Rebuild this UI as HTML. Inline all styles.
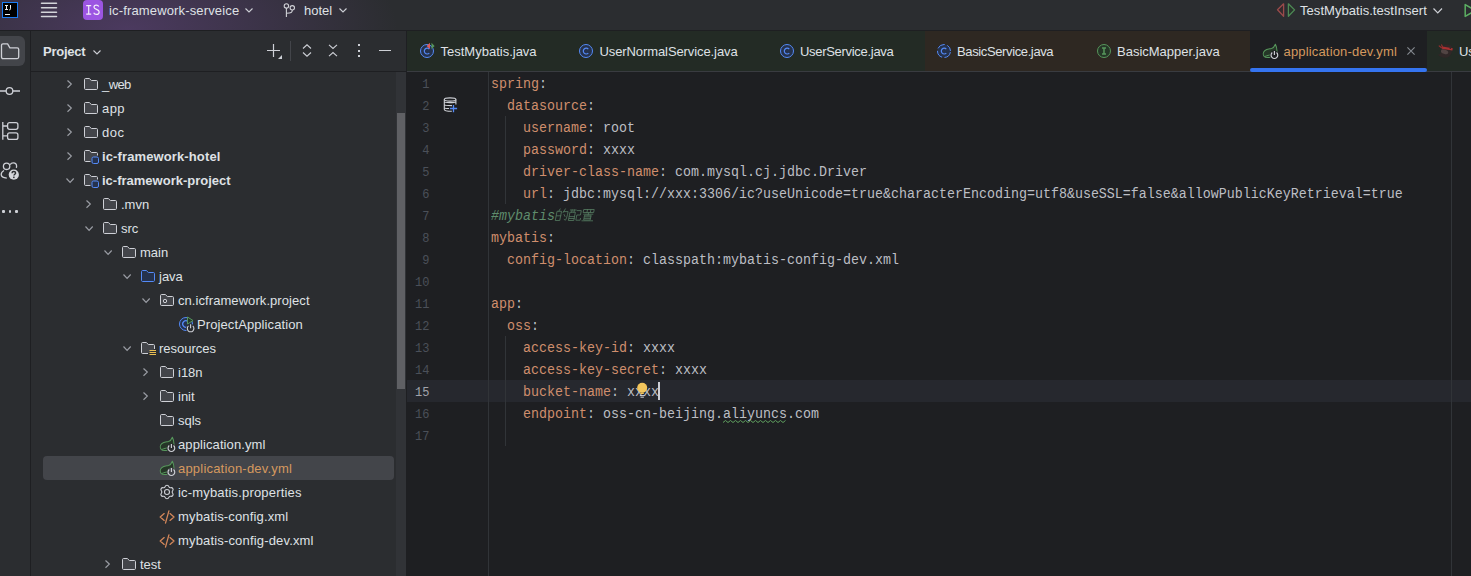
<!DOCTYPE html>
<html><head><meta charset="utf-8"><style>
*{margin:0;padding:0;box-sizing:border-box}
html,body{width:1471px;height:576px;overflow:hidden;background:#2B2D30;font-family:"Liberation Sans",sans-serif;font-size:13px;color:#DFE1E5}
.a{position:absolute}
.t{position:absolute;white-space:pre;line-height:16px}
svg{position:absolute;overflow:visible}
.mono{font-family:"Liberation Mono",monospace;font-size:13.333px}
.k{color:#CF8E6D}
.v{color:#BCBEC4}
.c{color:#5F8C6C;font-style:italic}
</style></head><body>
<div class="a" style="left:0;top:0;width:1471px;height:30px;background:#2B2D30"></div>
<div class="a" style="left:0;top:0;width:1471px;height:30px;background:radial-gradient(ellipse 270px 120px at 128px 30px, rgba(120,75,160,0.42), rgba(120,75,160,0) 100%)"></div>
<div class="a" style="left:0;top:30px;width:1471px;height:1px;background:#1E1F22"></div>
<svg style="left:2px;top:2px" width="16" height="16"><rect x="0.5" y="0.5" width="15" height="15" fill="#000" stroke="#1A7DF5" stroke-width="1"/><path d="M3 3.5 H6 M4.5 3.5 V7.5 M3 7.5 H6 M8.5 3 V6.8 C8.5 7.6 8.1 8 7.2 8" fill="none" stroke="#F0F0F0" stroke-width="1"/><rect x="3" y="12" width="5" height="1" fill="#F0F0F0"/></svg>
<svg style="left:41px;top:0px" width="16" height="20"><path d="M0.5 3.25 H15.5 M0.5 7.65 H15.5 M0.5 12.2 H15.5 M0.5 16.6 H15.5" stroke="#D4D5DA" stroke-width="1.5" stroke-linecap="round"/></svg>
<div class="a" style="left:83px;top:0px;width:20px;height:20px;background:#9C55E2;border-radius:4px"></div>
<svg style="left:83px;top:0px" width="20" height="20"><path d="M3.2 5.6 H8.2 M5.7 5.6 V14.1 M3.2 14.1 H8.2" fill="none" stroke="#F4EEFA" stroke-width="1.2"/><path d="M15.8 6.6 C15.3 5.6 14.4 5.2 13.3 5.2 C11.9 5.2 11 6 11 7.2 C11 9.8 16.2 9 16.2 11.9 C16.2 13.4 15 14.4 13.4 14.4 C12.1 14.4 11.1 13.8 10.7 12.8" fill="none" stroke="#F4EEFA" stroke-width="1.2"/></svg>
<div class="t" style="left:109px;top:3px;color:#DFE1E5;letter-spacing:0.15px">ic-framework-serveice</div>
<svg style="left:244.5px;top:8px" width="8" height="4.5"><path d="M0.5 0.5 L4.0 4.0 L7.5 0.5" fill="none" stroke="#CED0D6" stroke-width="1.1"/></svg>
<svg style="left:283px;top:3px" width="14" height="16"><circle cx="3.4" cy="2.9" r="2.2" fill="none" stroke="#D0D1D6" stroke-width="1.1"/><circle cx="9.3" cy="4.8" r="2.2" fill="none" stroke="#D0D1D6" stroke-width="1.1"/><path d="M3.4 5.1 V14 M9.3 7 C9.3 9.4 8.3 10.2 3.4 10.2" fill="none" stroke="#D0D1D6" stroke-width="1.1"/></svg>
<div class="t" style="left:304px;top:3px;color:#DFE1E5">hotel</div>
<svg style="left:339px;top:8px" width="8" height="4.5"><path d="M0.5 0.5 L4.0 4.0 L7.5 0.5" fill="none" stroke="#CED0D6" stroke-width="1.1"/></svg>
<svg style="left:1277px;top:3px" width="19" height="15"><path d="M6.6 0.8 L0.5 6.8 L6.6 13.2 Z" fill="#342A2D" stroke="#9A4B4B" stroke-width="1.3" stroke-linejoin="round"/><path d="M11.4 0.8 L17.6 6.9 L11.4 13.2 Z" fill="#28332B" stroke="#4E8A55" stroke-width="1.3" stroke-linejoin="round"/></svg>
<div class="t" style="left:1300px;top:3px;color:#DFE1E5;letter-spacing:0.05px">TestMybatis.testInsert</div>
<svg style="left:1432.5px;top:8px" width="9.5" height="5.5"><path d="M0.5 0.5 L4.75 5.0 L9.0 0.5" fill="none" stroke="#CED0D6" stroke-width="1.2"/></svg>
<svg style="left:1464px;top:3px" width="12" height="15"><path d="M1.2 1.6 L11.5 7.5 L1.2 13.4 Z" fill="none" stroke="#5BAE62" stroke-width="1.5" stroke-linejoin="round"/></svg>
<div class="a" style="left:30px;top:31px;width:1px;height:545px;background:#1E1F22"></div>
<div class="a" style="left:-6px;top:36px;width:31px;height:30px;background:#43454A;border-radius:6px"></div>
<svg style="left:0px;top:42px" width="20" height="18"><path d="M1.5 3.4 C1.5 2.5 2.1 1.9 3 1.9 H7.6 L9.9 5.8 H17.2 C18.1 5.8 18.7 6.4 18.7 7.3 V15.1 C18.7 16 18.1 16.6 17.2 16.6 H3 C2.1 16.6 1.5 16 1.5 15.1 Z" fill="none" stroke="#CED0D6" stroke-width="1.3" stroke-linejoin="round"/></svg>
<svg style="left:0px;top:84px" width="22" height="14"><path d="M0 7 H6 M13 7 H20" stroke="#CED0D6" stroke-width="1.3"/><circle cx="9.5" cy="7" r="3.3" fill="none" stroke="#CED0D6" stroke-width="1.3"/></svg>
<svg style="left:1px;top:120px" width="20" height="22"><path d="M1.8 2 V19.8 M1.8 6 H6.5 M1.8 15.9 H6.5" stroke="#CED0D6" stroke-width="1.3" fill="none"/><rect x="6.6" y="2.7" width="10.3" height="6.6" rx="2" fill="none" stroke="#CED0D6" stroke-width="1.3"/><rect x="6.6" y="12.8" width="10.3" height="6.6" rx="2" fill="none" stroke="#CED0D6" stroke-width="1.3"/></svg>
<svg style="left:0px;top:150px" width="24" height="32"><circle cx="6.6" cy="16.3" r="3.2" fill="none" stroke="#CED0D6" stroke-width="1.3"/><path d="M10.2 14.6 C10.8 13.5 11.9 12.9 13.3 12.9 C15.1 12.9 16.6 14.3 16.6 16.2 C16.6 16.8 16.5 17.3 16.2 17.8" fill="none" stroke="#CED0D6" stroke-width="1.3"/><path d="M4 20.5 C2.2 21.4 1.2 23 1.2 24.6 C1.2 26.6 3.5 27.9 6.8 28.2" fill="none" stroke="#CED0D6" stroke-width="1.3"/><circle cx="13.8" cy="24.7" r="6.3" fill="#2B2D30"/><circle cx="13.8" cy="24.7" r="5.1" fill="#D3D5DA"/><path d="M12 23.2 C12 22.1 12.8 21.5 13.8 21.5 C14.9 21.5 15.6 22.2 15.6 23 C15.6 24.2 13.9 24.3 13.9 25.6" fill="none" stroke="#2B2D30" stroke-width="1.4"/><rect x="13.1" y="26.6" width="1.5" height="1.5" fill="#2B2D30"/></svg>
<div class="a" style="left:2.25px;top:210.3px;width:2.5px;height:2.5px;background:#CED0D6;border-radius:1px"></div>
<div class="a" style="left:8.75px;top:210.3px;width:2.5px;height:2.5px;background:#CED0D6;border-radius:1px"></div>
<div class="a" style="left:15.25px;top:210.3px;width:2.5px;height:2.5px;background:#CED0D6;border-radius:1px"></div>
<div class="a" style="left:31px;top:71px;width:375px;height:1px;background:#1E1F22"></div>
<div class="a" style="left:406px;top:31px;width:1px;height:545px;background:#1E1F22"></div>
<div class="t" style="left:43px;top:44px;font-weight:bold;color:#DFE1E5;letter-spacing:-0.25px">Project</div>
<svg style="left:93px;top:49.5px" width="8" height="4.5"><path d="M0.5 0.5 L4.0 4.0 L7.5 0.5" fill="none" stroke="#CED0D6" stroke-width="1.1"/></svg>
<svg style="left:266px;top:43px" width="18" height="18"><path d="M7.5 1 V14 M1 7.5 H14" stroke="#CED0D6" stroke-width="1.2"/><path d="M16 12 V16 H12 Z" fill="#CED0D6"/></svg>
<div class="a" style="left:290px;top:41px;width:1px;height:20px;background:#43454A"></div>
<svg style="left:302px;top:44px" width="10" height="14"><path d="M1 4.5 L5 0.8 L9 4.5 M1 8.5 L5 12.2 L9 8.5" fill="none" stroke="#CED0D6" stroke-width="1.1"/></svg>
<svg style="left:328px;top:44px" width="10" height="14"><path d="M1 0.8 L5 4.5 L9 0.8 M1 12.2 L5 8.5 L9 12.2" fill="none" stroke="#CED0D6" stroke-width="1.1"/></svg>
<div class="a" style="left:358px;top:44px;width:2px;height:2px;background:#CED0D6"></div>
<div class="a" style="left:358px;top:49.5px;width:2px;height:2px;background:#CED0D6"></div>
<div class="a" style="left:358px;top:55px;width:2px;height:2px;background:#CED0D6"></div>
<div class="a" style="left:378.5px;top:50px;width:12.5px;height:1.3px;background:#CED0D6"></div>
<div class="a" style="left:396px;top:72px;width:10px;height:504px;background:#313337"></div>
<div class="a" style="left:397px;top:113px;width:8px;height:276px;background:#5F6064"></div>
<div class="a" style="left:43px;top:456px;width:351px;height:24px;background:#43454A;border-radius:4px"></div>
<svg style="left:67.3px;top:80px" width="4.8" height="8.2"><path d="M0.5 0.5 L4.3 4.1 L0.5 7.699999999999999" fill="none" stroke="#9A9DA4" stroke-width="1.2"/></svg>
<svg style="left:83px;top:76px" width="16" height="16"><path d="M1.5 3.5C1.5 2.95 1.95 2.5 2.5 2.5H6.3L8.4 4.5H13.5C14.05 4.5 14.5 4.95 14.5 5.5V12.5C14.5 13.05 14.05 13.5 13.5 13.5H2.5C1.95 13.5 1.5 13.05 1.5 12.5Z" fill="#43454A" stroke="#CED0D6"/></svg>
<div class="t" style="left:102px;top:77px;color:#DFE1E5;letter-spacing:-0.6px">_web</div>
<svg style="left:67.3px;top:104px" width="4.8" height="8.2"><path d="M0.5 0.5 L4.3 4.1 L0.5 7.699999999999999" fill="none" stroke="#9A9DA4" stroke-width="1.2"/></svg>
<svg style="left:83px;top:100px" width="16" height="16"><path d="M1.5 3.5C1.5 2.95 1.95 2.5 2.5 2.5H6.3L8.4 4.5H13.5C14.05 4.5 14.5 4.95 14.5 5.5V12.5C14.5 13.05 14.05 13.5 13.5 13.5H2.5C1.95 13.5 1.5 13.05 1.5 12.5Z" fill="#43454A" stroke="#CED0D6"/></svg>
<div class="t" style="left:102px;top:101px;color:#DFE1E5;letter-spacing:0.4px">app</div>
<svg style="left:67.3px;top:128px" width="4.8" height="8.2"><path d="M0.5 0.5 L4.3 4.1 L0.5 7.699999999999999" fill="none" stroke="#9A9DA4" stroke-width="1.2"/></svg>
<svg style="left:83px;top:124px" width="16" height="16"><path d="M1.5 3.5C1.5 2.95 1.95 2.5 2.5 2.5H6.3L8.4 4.5H13.5C14.05 4.5 14.5 4.95 14.5 5.5V12.5C14.5 13.05 14.05 13.5 13.5 13.5H2.5C1.95 13.5 1.5 13.05 1.5 12.5Z" fill="#43454A" stroke="#CED0D6"/></svg>
<div class="t" style="left:102px;top:125px;color:#DFE1E5;letter-spacing:0.5px">doc</div>
<svg style="left:67.3px;top:152px" width="4.8" height="8.2"><path d="M0.5 0.5 L4.3 4.1 L0.5 7.699999999999999" fill="none" stroke="#9A9DA4" stroke-width="1.2"/></svg>
<svg style="left:83px;top:148px" width="17" height="17"><path d="M7.5 13.5H2.5C1.95 13.5 1.5 13.05 1.5 12.5V3.5C1.5 2.95 1.95 2.5 2.5 2.5H6.3L8.4 4.5H13.5C14.05 4.5 14.5 4.95 14.5 5.5V7.5" fill="#43454A" stroke="#CED0D6"/><rect x="9" y="9" width="6.5" height="6.5" rx="1.5" fill="#25324D" stroke="#548AF7"/></svg>
<div class="t" style="left:102px;top:149px;color:#DFE1E5;font-weight:bold;letter-spacing:0.12px">ic-framework-hotel</div>
<svg style="left:65.8px;top:177.6px" width="8.2" height="4.8"><path d="M0.5 0.5 L4.1 4.3 L7.699999999999999 0.5" fill="none" stroke="#9A9DA4" stroke-width="1.2"/></svg>
<svg style="left:83px;top:172px" width="17" height="17"><path d="M7.5 13.5H2.5C1.95 13.5 1.5 13.05 1.5 12.5V3.5C1.5 2.95 1.95 2.5 2.5 2.5H6.3L8.4 4.5H13.5C14.05 4.5 14.5 4.95 14.5 5.5V7.5" fill="#43454A" stroke="#CED0D6"/><rect x="9" y="9" width="6.5" height="6.5" rx="1.5" fill="#25324D" stroke="#548AF7"/></svg>
<div class="t" style="left:102px;top:173px;color:#DFE1E5;font-weight:bold;letter-spacing:0px">ic-framework-project</div>
<svg style="left:86.3px;top:200px" width="4.8" height="8.2"><path d="M0.5 0.5 L4.3 4.1 L0.5 7.699999999999999" fill="none" stroke="#9A9DA4" stroke-width="1.2"/></svg>
<svg style="left:102px;top:196px" width="16" height="16"><path d="M1.5 3.5C1.5 2.95 1.95 2.5 2.5 2.5H6.3L8.4 4.5H13.5C14.05 4.5 14.5 4.95 14.5 5.5V12.5C14.5 13.05 14.05 13.5 13.5 13.5H2.5C1.95 13.5 1.5 13.05 1.5 12.5Z" fill="#43454A" stroke="#CED0D6"/></svg>
<div class="t" style="left:121px;top:197px;color:#DFE1E5;letter-spacing:0px">.mvn</div>
<svg style="left:84.8px;top:225.6px" width="8.2" height="4.8"><path d="M0.5 0.5 L4.1 4.3 L7.699999999999999 0.5" fill="none" stroke="#9A9DA4" stroke-width="1.2"/></svg>
<svg style="left:102px;top:220px" width="16" height="16"><path d="M1.5 3.5C1.5 2.95 1.95 2.5 2.5 2.5H6.3L8.4 4.5H13.5C14.05 4.5 14.5 4.95 14.5 5.5V12.5C14.5 13.05 14.05 13.5 13.5 13.5H2.5C1.95 13.5 1.5 13.05 1.5 12.5Z" fill="#43454A" stroke="#CED0D6"/></svg>
<div class="t" style="left:121px;top:221px;color:#DFE1E5;letter-spacing:0px">src</div>
<svg style="left:103.8px;top:249.6px" width="8.2" height="4.8"><path d="M0.5 0.5 L4.1 4.3 L7.699999999999999 0.5" fill="none" stroke="#9A9DA4" stroke-width="1.2"/></svg>
<svg style="left:121px;top:244px" width="16" height="16"><path d="M1.5 3.5C1.5 2.95 1.95 2.5 2.5 2.5H6.3L8.4 4.5H13.5C14.05 4.5 14.5 4.95 14.5 5.5V12.5C14.5 13.05 14.05 13.5 13.5 13.5H2.5C1.95 13.5 1.5 13.05 1.5 12.5Z" fill="#43454A" stroke="#CED0D6"/></svg>
<div class="t" style="left:140px;top:245px;color:#DFE1E5;letter-spacing:0px">main</div>
<svg style="left:122.8px;top:273.6px" width="8.2" height="4.8"><path d="M0.5 0.5 L4.1 4.3 L7.699999999999999 0.5" fill="none" stroke="#9A9DA4" stroke-width="1.2"/></svg>
<svg style="left:140px;top:268px" width="16" height="16"><path d="M1.5 3.5C1.5 2.95 1.95 2.5 2.5 2.5H6.3L8.4 4.5H13.5C14.05 4.5 14.5 4.95 14.5 5.5V12.5C14.5 13.05 14.05 13.5 13.5 13.5H2.5C1.95 13.5 1.5 13.05 1.5 12.5Z" fill="#25324D" stroke="#548AF7"/></svg>
<div class="t" style="left:159px;top:269px;color:#DFE1E5;letter-spacing:0px">java</div>
<svg style="left:141.8px;top:297.6px" width="8.2" height="4.8"><path d="M0.5 0.5 L4.1 4.3 L7.699999999999999 0.5" fill="none" stroke="#9A9DA4" stroke-width="1.2"/></svg>
<svg style="left:159px;top:292px" width="16" height="16"><path d="M1.5 3.5C1.5 2.95 1.95 2.5 2.5 2.5H6.3L8.4 4.5H13.5C14.05 4.5 14.5 4.95 14.5 5.5V12.5C14.5 13.05 14.05 13.5 13.5 13.5H2.5C1.95 13.5 1.5 13.05 1.5 12.5Z" fill="#43454A" stroke="#CED0D6"/><circle cx="6" cy="9" r="1.7" fill="none" stroke="#CED0D6"/></svg>
<div class="t" style="left:178px;top:293px;color:#DFE1E5;letter-spacing:0.07px">cn.icframework.project</div>
<svg style="left:178px;top:316px" width="17" height="17"><circle cx="8" cy="8" r="6.5" fill="#25324D" stroke="#548AF7"/><path d="M10 5.6 A3.2 3.2 0 1 0 10 10.4" fill="none" stroke="#548AF7" stroke-width="1.2"/><path d="M9.5 1 L15 4.5 L9.5 8 Z" fill="#253627" stroke="#57965C" stroke-linejoin="round"/><circle cx="12.6" cy="12.5" r="4.6" fill="#2B2D30"/><path d="M14.7 9.95 A3.3 3.3 0 1 1 10.5 9.95 M12.6 8.2 V12.2" fill="none" stroke="#CED0D6" stroke-width="1.1"/></svg>
<div class="t" style="left:197px;top:317px;color:#DFE1E5;letter-spacing:0.1px">ProjectApplication</div>
<svg style="left:122.8px;top:345.6px" width="8.2" height="4.8"><path d="M0.5 0.5 L4.1 4.3 L7.699999999999999 0.5" fill="none" stroke="#9A9DA4" stroke-width="1.2"/></svg>
<svg style="left:140px;top:340px" width="17" height="17"><path d="M8 13.5H2.5C1.95 13.5 1.5 13.05 1.5 12.5V3.5C1.5 2.95 1.95 2.5 2.5 2.5H6.3L8.4 4.5H13.5C14.05 4.5 14.5 4.95 14.5 5.5V9" fill="#43454A" stroke="#CED0D6"/><path d="M9.5 10.5H16 M9.5 12.5H16 M9.5 14.5H16" stroke="#E8BE52" stroke-width="1.15"/></svg>
<div class="t" style="left:159px;top:341px;color:#DFE1E5;letter-spacing:0px">resources</div>
<svg style="left:143.3px;top:368px" width="4.8" height="8.2"><path d="M0.5 0.5 L4.3 4.1 L0.5 7.699999999999999" fill="none" stroke="#9A9DA4" stroke-width="1.2"/></svg>
<svg style="left:159px;top:364px" width="16" height="16"><path d="M1.5 3.5C1.5 2.95 1.95 2.5 2.5 2.5H6.3L8.4 4.5H13.5C14.05 4.5 14.5 4.95 14.5 5.5V12.5C14.5 13.05 14.05 13.5 13.5 13.5H2.5C1.95 13.5 1.5 13.05 1.5 12.5Z" fill="#43454A" stroke="#CED0D6"/></svg>
<div class="t" style="left:178px;top:365px;color:#DFE1E5;letter-spacing:0px">i18n</div>
<svg style="left:143.3px;top:392px" width="4.8" height="8.2"><path d="M0.5 0.5 L4.3 4.1 L0.5 7.699999999999999" fill="none" stroke="#9A9DA4" stroke-width="1.2"/></svg>
<svg style="left:159px;top:388px" width="16" height="16"><path d="M1.5 3.5C1.5 2.95 1.95 2.5 2.5 2.5H6.3L8.4 4.5H13.5C14.05 4.5 14.5 4.95 14.5 5.5V12.5C14.5 13.05 14.05 13.5 13.5 13.5H2.5C1.95 13.5 1.5 13.05 1.5 12.5Z" fill="#43454A" stroke="#CED0D6"/></svg>
<div class="t" style="left:178px;top:389px;color:#DFE1E5;letter-spacing:0px">init</div>
<svg style="left:159px;top:412px" width="16" height="16"><path d="M1.5 3.5C1.5 2.95 1.95 2.5 2.5 2.5H6.3L8.4 4.5H13.5C14.05 4.5 14.5 4.95 14.5 5.5V12.5C14.5 13.05 14.05 13.5 13.5 13.5H2.5C1.95 13.5 1.5 13.05 1.5 12.5Z" fill="#43454A" stroke="#CED0D6"/></svg>
<div class="t" style="left:178px;top:413px;color:#DFE1E5;letter-spacing:0px">sqls</div>
<svg style="left:159px;top:436px" width="17" height="17"><path d="M13.4 1.3 C14.4 3.2 15 5.6 15 8.6 L12 12.5 L8.4 14.3 C5.5 14.7 3.2 14.7 2.2 13.5 C0.9 12 1 9.3 2.8 7.6 C4.5 6 7 6 9.5 5.5 C11.5 5 12.5 3.5 13.4 1.3 Z" fill="#253627" stroke="#57965C" stroke-width="1.1" stroke-linejoin="round"/><path d="M2.6 13.6 C4.6 12.6 7.4 12 10.2 11.6" fill="none" stroke="#57965C" stroke-width="1"/><circle cx="12.4" cy="12.2" r="4.7" fill="#2B2D30"/><path d="M14.55 9.55 A3.35 3.35 0 1 1 10.25 9.55 M12.4 7.9 V12" fill="none" stroke="#CED0D6" stroke-width="1.15"/></svg>
<div class="t" style="left:178px;top:437px;color:#DFE1E5;letter-spacing:0.1px">application.yml</div>
<svg style="left:159px;top:460px" width="17" height="17"><path d="M13.4 1.3 C14.4 3.2 15 5.6 15 8.6 L12 12.5 L8.4 14.3 C5.5 14.7 3.2 14.7 2.2 13.5 C0.9 12 1 9.3 2.8 7.6 C4.5 6 7 6 9.5 5.5 C11.5 5 12.5 3.5 13.4 1.3 Z" fill="#253627" stroke="#57965C" stroke-width="1.1" stroke-linejoin="round"/><path d="M2.6 13.6 C4.6 12.6 7.4 12 10.2 11.6" fill="none" stroke="#57965C" stroke-width="1"/><circle cx="12.4" cy="12.2" r="4.7" fill="#43454A"/><path d="M14.55 9.55 A3.35 3.35 0 1 1 10.25 9.55 M12.4 7.9 V12" fill="none" stroke="#CED0D6" stroke-width="1.15"/></svg>
<div class="t" style="left:178px;top:461px;color:#D5995F;letter-spacing:0.2px">application-dev.yml</div>
<svg style="left:159px;top:484px" width="16" height="16"><path d="M11.71 3.70 Q10.30 4.02 9.87 2.63 Q9.43 1.25 8.00 1.25 Q6.57 1.25 6.13 2.63 Q5.70 4.02 4.29 3.70 Q2.87 3.38 2.16 4.63 Q1.44 5.87 2.42 6.93 Q3.40 8.00 2.42 9.07 Q1.44 10.13 2.16 11.37 Q2.87 12.62 4.29 12.30 Q5.70 11.98 6.13 13.37 Q6.57 14.75 8.00 14.75 Q9.43 14.75 9.87 13.37 Q10.30 11.98 11.71 12.30 Q13.13 12.62 13.84 11.37 Q14.56 10.13 13.58 9.07 Q12.60 8.00 13.58 6.93 Q14.56 5.87 13.84 4.63 Q13.13 3.38 11.71 3.70 Z" fill="none" stroke="#CED0D6" stroke-width="1.1" stroke-linejoin="round"/><circle cx="8" cy="8" r="2.5" fill="none" stroke="#CED0D6" stroke-width="1.1"/></svg>
<div class="t" style="left:178px;top:485px;color:#DFE1E5;letter-spacing:0.175px">ic-mybatis.properties</div>
<svg style="left:159px;top:508.7px" width="16" height="16"><path d="M5.2 4.6 L1.2 8 L5.2 11.4 M11 4.6 L15 8 L11 11.4 M9.9 1.8 L6.5 14.2" fill="none" stroke="#D4875A" stroke-width="1.3" stroke-linecap="round" stroke-linejoin="round"/></svg>
<div class="t" style="left:178px;top:509px;color:#DFE1E5;letter-spacing:0.15px">mybatis-config.xml</div>
<svg style="left:159px;top:532.7px" width="16" height="16"><path d="M5.2 4.6 L1.2 8 L5.2 11.4 M11 4.6 L15 8 L11 11.4 M9.9 1.8 L6.5 14.2" fill="none" stroke="#D4875A" stroke-width="1.3" stroke-linecap="round" stroke-linejoin="round"/></svg>
<div class="t" style="left:178px;top:533px;color:#DFE1E5;letter-spacing:0.167px">mybatis-config-dev.xml</div>
<svg style="left:105.3px;top:560px" width="4.8" height="8.2"><path d="M0.5 0.5 L4.3 4.1 L0.5 7.699999999999999" fill="none" stroke="#9A9DA4" stroke-width="1.2"/></svg>
<svg style="left:121px;top:556px" width="16" height="16"><path d="M1.5 3.5C1.5 2.95 1.95 2.5 2.5 2.5H6.3L8.4 4.5H13.5C14.05 4.5 14.5 4.95 14.5 5.5V12.5C14.5 13.05 14.05 13.5 13.5 13.5H2.5C1.95 13.5 1.5 13.05 1.5 12.5Z" fill="#43454A" stroke="#CED0D6"/></svg>
<div class="t" style="left:140px;top:557px;color:#DFE1E5;letter-spacing:0px">test</div>
<div class="a" style="left:407px;top:72px;width:1064px;height:504px;background:#1E1F22"></div>
<div class="a" style="left:407px;top:31px;width:1064px;height:40px;background:#2B2D30"></div>
<div class="a" style="left:407px;top:31px;width:159px;height:40px;background:#232B25"></div>
<div class="a" style="left:566px;top:31px;width:201px;height:40px;background:#232B25"></div>
<div class="a" style="left:767px;top:31px;width:157.5px;height:40px;background:#232B25"></div>
<div class="a" style="left:924.5px;top:31px;width:159.5px;height:40px;background:#2E2822"></div>
<div class="a" style="left:1084px;top:31px;width:166px;height:40px;background:#2E2822"></div>
<div class="a" style="left:1250px;top:31px;width:177px;height:40px;background:#1E1F22"></div>
<div class="a" style="left:1427px;top:31px;width:44px;height:40px;background:#232B25"></div>
<div class="a" style="left:407px;top:71px;width:1064px;height:1px;background:#393B40"></div>
<svg style="left:420.0px;top:43px" width="17" height="17"><circle cx="7" cy="8" r="6.5" fill="#25324D" stroke="#548AF7"/><path d="M9.3 6.1 A2.9 2.9 0 1 0 9.3 10.1" fill="none" stroke="#548AF7" stroke-width="1.2"/><path d="M10 -0.3 V6.2 L6.6 3 Z" fill="#DB5C5C"/><path d="M11.5 -0.3 V6.2 L14.6 3 Z" fill="#57965C"/></svg>
<div class="t" style="left:440.5px;top:44px;color:#DFE1E5;letter-spacing:0px">TestMybatis.java</div>
<svg style="left:579.0px;top:43px" width="17" height="17"><circle cx="7" cy="8" r="6.5" fill="#25324D" stroke="#548AF7"/><path d="M9.3 6.1 A2.9 2.9 0 1 0 9.3 10.1" fill="none" stroke="#548AF7" stroke-width="1.2"/></svg>
<div class="t" style="left:599.5px;top:44px;color:#DFE1E5;letter-spacing:-0.095px">UserNormalService.java</div>
<svg style="left:779.5px;top:43px" width="17" height="17"><circle cx="7" cy="8" r="6.5" fill="#25324D" stroke="#548AF7"/><path d="M9.3 6.1 A2.9 2.9 0 1 0 9.3 10.1" fill="none" stroke="#548AF7" stroke-width="1.2"/></svg>
<div class="t" style="left:800px;top:44px;color:#DFE1E5;letter-spacing:-0.3px">UserService.java</div>
<svg style="left:936.5px;top:43px" width="17" height="17"><circle cx="7" cy="8" r="6.5" fill="#25324D" stroke="#548AF7" stroke-dasharray="8.2 2.5" stroke-dashoffset="-1.2"/><path d="M9.3 6.1 A2.9 2.9 0 1 0 9.3 10.1" fill="none" stroke="#548AF7" stroke-width="1.2"/></svg>
<div class="t" style="left:957px;top:44px;color:#DFE1E5;letter-spacing:-0.375px">BasicService.java</div>
<svg style="left:1096.5px;top:43px" width="17" height="17"><circle cx="7" cy="8" r="6.5" fill="#253627" stroke="#57965C"/><path d="M5 4.9 H9 M5 11.1 H9 M7 4.9 V11.1" fill="none" stroke="#57965C" stroke-width="1.5"/></svg>
<div class="t" style="left:1117px;top:44px;color:#DFE1E5;letter-spacing:0px">BasicMapper.java</div>
<svg style="left:1262.0px;top:43px" width="17" height="17"><path d="M13.4 1.3 C14.4 3.2 15 5.6 15 8.6 L12 12.5 L8.4 14.3 C5.5 14.7 3.2 14.7 2.2 13.5 C0.9 12 1 9.3 2.8 7.6 C4.5 6 7 6 9.5 5.5 C11.5 5 12.5 3.5 13.4 1.3 Z" fill="#253627" stroke="#57965C" stroke-width="1.1" stroke-linejoin="round"/><path d="M2.6 13.6 C4.6 12.6 7.4 12 10.2 11.6" fill="none" stroke="#57965C" stroke-width="1"/><circle cx="12.4" cy="12.2" r="4.7" fill="#1E1F22"/><path d="M14.55 9.55 A3.35 3.35 0 1 1 10.25 9.55 M12.4 7.9 V12" fill="none" stroke="#CED0D6" stroke-width="1.15"/></svg>
<div class="t" style="left:1283.5px;top:44px;color:#D5995F;letter-spacing:0.167px">application-dev.yml</div>
<svg style="left:1436px;top:42px" width="20" height="18"><path d="M16 5 C17 10 14.5 15.5 9.5 15.7 C6.5 15.8 3.5 14.6 2 12.8 C4.6 12.3 5 10.5 5 8.5 C5.5 4.5 8.5 2.6 11.8 2.6 C13.8 2.6 15.4 3.5 16 5Z" fill="#302727"/><ellipse cx="8.6" cy="9.8" rx="3.8" ry="2.2" transform="rotate(20 8.6 9.8)" fill="#514443"/><path d="M6 5.6 L16.6 7.4" stroke="#A83030" stroke-width="2.2"/><path d="M2.8 3.6 L5.8 6 M5.4 2.6 L6.8 5.4" stroke="#9A2E2E" stroke-width="1.1"/><circle cx="14.3" cy="6.3" r="0.8" fill="#2A2525"/></svg>
<div class="t" style="left:1459px;top:44px;color:#DFE1E5;letter-spacing:-0.095px">UserNormalService.java</div>
<svg style="left:1407px;top:47px" width="8" height="8"><path d="M0.4 0.4 L7.6 7.6 M7.6 0.4 L0.4 7.6" stroke="#868A91" stroke-width="1.1"/></svg>
<div class="a" style="left:1250px;top:68px;width:177px;height:4px;background:#3574F0;border-radius:2px"></div>
<div class="a" style="left:407px;top:380px;width:1064px;height:22px;background:#26282E"></div>
<div class="a" style="left:488px;top:72px;width:1px;height:504px;background:#313438"></div>
<div class="a" style="left:1451px;top:72px;width:1px;height:504px;background:#313438"></div>
<div class="a" style="left:505px;top:116px;width:1px;height:88px;background:#313438"></div>
<div class="a" style="left:505px;top:336px;width:1px;height:110px;background:#313438"></div>
<div class="t mono" style="left:389.4px;width:40px;text-align:right;top:73.5px;line-height:22px;font-size:12px;transform:scaleY(1.11);transform-origin:0 14.5px;color:#4B5059">1</div>
<div class="t mono" style="left:491px;top:73.5px;line-height:22px;transform:scaleY(1.15);transform-origin:0 14.5px"><span class="k">spring</span><span class="v">:</span></div>
<div class="t mono" style="left:389.4px;width:40px;text-align:right;top:95.5px;line-height:22px;font-size:12px;transform:scaleY(1.11);transform-origin:0 14.5px;color:#4B5059">2</div>
<div class="t mono" style="left:491px;top:95.5px;line-height:22px;transform:scaleY(1.15);transform-origin:0 14.5px"><span class="v">  </span><span class="k">datasource</span><span class="v">:</span></div>
<div class="t mono" style="left:389.4px;width:40px;text-align:right;top:117.5px;line-height:22px;font-size:12px;transform:scaleY(1.11);transform-origin:0 14.5px;color:#4B5059">3</div>
<div class="t mono" style="left:491px;top:117.5px;line-height:22px;transform:scaleY(1.15);transform-origin:0 14.5px"><span class="v">    </span><span class="k">username</span><span class="v">: root</span></div>
<div class="t mono" style="left:389.4px;width:40px;text-align:right;top:139.5px;line-height:22px;font-size:12px;transform:scaleY(1.11);transform-origin:0 14.5px;color:#4B5059">4</div>
<div class="t mono" style="left:491px;top:139.5px;line-height:22px;transform:scaleY(1.15);transform-origin:0 14.5px"><span class="v">    </span><span class="k">password</span><span class="v">: xxxx</span></div>
<div class="t mono" style="left:389.4px;width:40px;text-align:right;top:161.5px;line-height:22px;font-size:12px;transform:scaleY(1.11);transform-origin:0 14.5px;color:#4B5059">5</div>
<div class="t mono" style="left:491px;top:161.5px;line-height:22px;transform:scaleY(1.15);transform-origin:0 14.5px"><span class="v">    </span><span class="k">driver-class-name</span><span class="v">: com.mysql.cj.jdbc.Driver</span></div>
<div class="t mono" style="left:389.4px;width:40px;text-align:right;top:183.5px;line-height:22px;font-size:12px;transform:scaleY(1.11);transform-origin:0 14.5px;color:#4B5059">6</div>
<div class="t mono" style="left:491px;top:183.5px;line-height:22px;transform:scaleY(1.15);transform-origin:0 14.5px"><span class="v">    </span><span class="k">url</span><span class="v">: jdbc:mysql://xxx:3306/ic?useUnicode=true&amp;characterEncoding=utf8&amp;useSSL=false&amp;allowPublicKeyRetrieval=true</span></div>
<div class="t mono" style="left:389.4px;width:40px;text-align:right;top:205.5px;line-height:22px;font-size:12px;transform:scaleY(1.11);transform-origin:0 14.5px;color:#4B5059">7</div>
<div class="t mono" style="left:491px;top:205.5px;line-height:22px;transform:scaleY(1.15);transform-origin:0 14.5px"><span class="c">#mybatis</span></div>
<div class="t mono" style="left:389.4px;width:40px;text-align:right;top:227.5px;line-height:22px;font-size:12px;transform:scaleY(1.11);transform-origin:0 14.5px;color:#4B5059">8</div>
<div class="t mono" style="left:491px;top:227.5px;line-height:22px;transform:scaleY(1.15);transform-origin:0 14.5px"><span class="k">mybatis</span><span class="v">:</span></div>
<div class="t mono" style="left:389.4px;width:40px;text-align:right;top:249.5px;line-height:22px;font-size:12px;transform:scaleY(1.11);transform-origin:0 14.5px;color:#4B5059">9</div>
<div class="t mono" style="left:491px;top:249.5px;line-height:22px;transform:scaleY(1.15);transform-origin:0 14.5px"><span class="v">  </span><span class="k">config-location</span><span class="v">: classpath:mybatis-config-dev.xml</span></div>
<div class="t mono" style="left:389.4px;width:40px;text-align:right;top:271.5px;line-height:22px;font-size:12px;transform:scaleY(1.11);transform-origin:0 14.5px;color:#4B5059">10</div>
<div class="t mono" style="left:491px;top:271.5px;line-height:22px;transform:scaleY(1.15);transform-origin:0 14.5px"></div>
<div class="t mono" style="left:389.4px;width:40px;text-align:right;top:293.5px;line-height:22px;font-size:12px;transform:scaleY(1.11);transform-origin:0 14.5px;color:#4B5059">11</div>
<div class="t mono" style="left:491px;top:293.5px;line-height:22px;transform:scaleY(1.15);transform-origin:0 14.5px"><span class="k">app</span><span class="v">:</span></div>
<div class="t mono" style="left:389.4px;width:40px;text-align:right;top:315.5px;line-height:22px;font-size:12px;transform:scaleY(1.11);transform-origin:0 14.5px;color:#4B5059">12</div>
<div class="t mono" style="left:491px;top:315.5px;line-height:22px;transform:scaleY(1.15);transform-origin:0 14.5px"><span class="v">  </span><span class="k">oss</span><span class="v">:</span></div>
<div class="t mono" style="left:389.4px;width:40px;text-align:right;top:337.5px;line-height:22px;font-size:12px;transform:scaleY(1.11);transform-origin:0 14.5px;color:#4B5059">13</div>
<div class="t mono" style="left:491px;top:337.5px;line-height:22px;transform:scaleY(1.15);transform-origin:0 14.5px"><span class="v">    </span><span class="k">access-key-id</span><span class="v">: xxxx</span></div>
<div class="t mono" style="left:389.4px;width:40px;text-align:right;top:359.5px;line-height:22px;font-size:12px;transform:scaleY(1.11);transform-origin:0 14.5px;color:#4B5059">14</div>
<div class="t mono" style="left:491px;top:359.5px;line-height:22px;transform:scaleY(1.15);transform-origin:0 14.5px"><span class="v">    </span><span class="k">access-key-secret</span><span class="v">: xxxx</span></div>
<div class="t mono" style="left:389.4px;width:40px;text-align:right;top:381.5px;line-height:22px;font-size:12px;transform:scaleY(1.11);transform-origin:0 14.5px;color:#A1A3AB">15</div>
<div class="t mono" style="left:491px;top:381.5px;line-height:22px;transform:scaleY(1.15);transform-origin:0 14.5px"><span class="v">    </span><span class="k">bucket-name</span><span class="v">: xxxx</span></div>
<div class="t mono" style="left:389.4px;width:40px;text-align:right;top:403.5px;line-height:22px;font-size:12px;transform:scaleY(1.11);transform-origin:0 14.5px;color:#4B5059">16</div>
<div class="t mono" style="left:491px;top:403.5px;line-height:22px;transform:scaleY(1.15);transform-origin:0 14.5px"><span class="v">    </span><span class="k">endpoint</span><span class="v">: oss-cn-beijing.aliyuncs.com</span></div>
<div class="t mono" style="left:389.4px;width:40px;text-align:right;top:425.5px;line-height:22px;font-size:12px;transform:scaleY(1.11);transform-origin:0 14.5px;color:#4B5059">17</div>
<div class="t mono" style="left:491px;top:425.5px;line-height:22px;transform:scaleY(1.15);transform-origin:0 14.5px"></div>
<svg style="left:555px;top:208px" width="42" height="14"><g transform="translate(2 0) skewX(-11)" fill="none" stroke="#53785E" stroke-width="0.8" stroke-linecap="square"><path d="M3.3 1 L2.5 3 M1.2 3.3 H5.2 V12.5 H1.2 Z M1.2 7.8 H5.2 M8.5 1 L7 4.5 M7.5 3.6 H11.8 C11.8 8 11.5 11 10.8 12.2 L9.5 11.5 M8.4 6.6 L9.6 8.4"/><path d="M13.8 2 H19.5 M15.5 2 V4.2 M17.8 2 V4.2 M14.3 4.2 H19.2 V12.5 H14.3 Z M14.3 8.6 H19.2 M14.3 10.5 H19.2 M20.8 2.6 H24.8 V7 H21.2 V12.2 H25.5 V10.5"/><path d="M27.5 1.5 H37.5 V4.5 H27.5 Z M30.8 1.5 V4.5 M34.2 1.5 V4.5 M28 6.2 H37 M32.5 5 V7 M29.5 7.2 H35.5 V12 H29.5 Z M29.5 8.8 H35.5 M29.5 10.4 H35.5 M27.5 12.8 H38"/></g></svg>
<svg style="left:635px;top:381px" width="14" height="18"><circle cx="7.2" cy="6.7" r="5" fill="#F2C55C"/><path d="M5 11.5 H9.4 L8.6 13 H5.8 Z" fill="#F2C55C"/><path d="M4.8 14.6 H9.6 M5.5 16.2 H8.9" stroke="#CED0D6" stroke-width="1"/></svg>
<div class="a" style="left:658px;top:382px;width:2px;height:18px;background:#CED0D6"></div>
<svg style="left:723px;top:420px" width="64" height="4"><polyline points="0.0,2.5 2.5,0.5 5.0,2.5 7.5,0.5 10.0,2.5 12.5,0.5 15.0,2.5 17.5,0.5 20.0,2.5 22.5,0.5 25.0,2.5 27.5,0.5 30.0,2.5 32.5,0.5 35.0,2.5 37.5,0.5 40.0,2.5 42.5,0.5 45.0,2.5 47.5,0.5 50.0,2.5 52.5,0.5 55.0,2.5 57.5,0.5 60.0,2.5 62.5,0.5" fill="none" stroke="#5FA05F" stroke-width="1"/></svg>
<svg style="left:438px;top:94px" width="24" height="24"><g fill="none" stroke="#CED0D6" stroke-width="1.1"><ellipse cx="12.1" cy="5.5" rx="5.8" ry="1.6"/><path d="M6.3 5.5 V15.5 C6.3 16.8 9 17.3 13.8 17.3 M17.9 5.5 V10.6 M6.3 7.5 C6.3 9 17.9 9 17.9 7.5 M6.3 10.5 C6.3 11.5 9 11.6 14 11.6 M6.3 13.4 C6.3 14.3 8 14.5 11 14.5"/></g><path d="M15.5 11 V18.2 M11.9 14.5 H19.1" stroke="#548AF7" stroke-width="1.3"/></svg>
</body></html>
